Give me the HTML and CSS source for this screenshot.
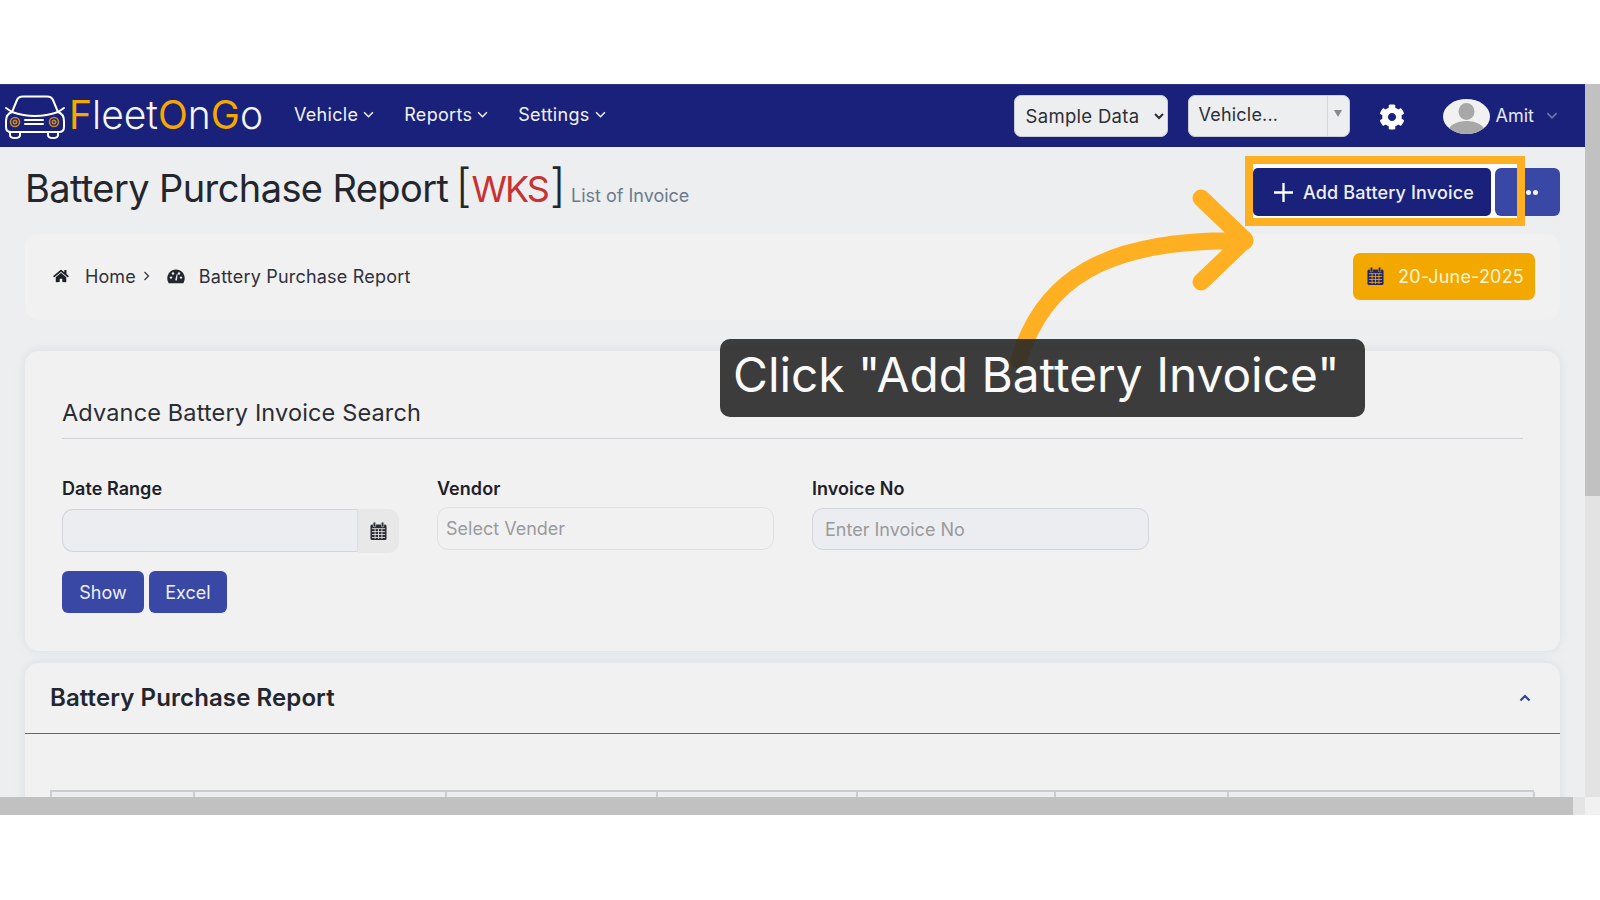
FILE: index.html
```html
<!DOCTYPE html>
<html lang="en">
<head>
<meta charset="utf-8">
<title>Battery Purchase Report</title>
<link rel="stylesheet" href="styles.css">
</head>
<body>
<svg class="defs" aria-hidden="true">
  <symbol id="cal" viewBox="0 0 18 20">
    <rect x="0.5" y="3" width="17" height="16.5" rx="1.6" fill="currentColor"/>
    <rect x="3.4" y="0.6" width="2.6" height="5" rx="1.2" fill="currentColor" stroke="var(--cell)" stroke-width=".7"/>
    <rect x="12" y="0.6" width="2.6" height="5" rx="1.2" fill="currentColor" stroke="var(--cell)" stroke-width=".7"/>
    <g stroke="var(--cell)" stroke-width=".9">
      <path d="M2 7.5H16M2 10.6H16M2 13.7H16M2 16.8H16M5.4 7.5V18.4M9 7.5V18.4M12.6 7.5V18.4"/>
    </g>
  </symbol>
</svg>

<div class="gap-top"></div>

<div class="frame">
  <div class="viewport">
    <div class="page">
      <nav class="nav">
        <a class="brand">
          <svg class="car" viewBox="0 0 60 44" aria-hidden="true">
            <g fill="none" stroke="#fff" stroke-width="2" stroke-linecap="round" stroke-linejoin="round">
              <path d="M7 17 12 5Q13.5 1.500 18 1.500H42Q46.500 1.500 48 5L53 17"/>
              <path d="M1 13 7 17Q30 25 53 17L59 13"/>
              <path d="M7 17Q1 19 1 26V32Q1 37 6 37H54Q59 37 59 32V26Q59 19 53 17"/>
              <path d="M5 37V40Q5 43 10 43T15 40V37M43 37V40Q43 43 48 43T53 40V37"/>
              <path d="M20 25H38M20 29H38"/>
            </g>
            <g fill="none" stroke="#c98a25" stroke-width="1.600">
              <circle cx="10" cy="27" r="4.500"/><circle cx="10" cy="27" r="1.700"/>
              <circle cx="49" cy="27" r="4.500"/><circle cx="49" cy="27" r="1.700"/>
            </g>
          </svg>
          <span class="brand-name"><b>F</b>leet<b>O</b>n<b>G</b>o</span>
        </a>
        <ul class="menu">
          <li class="menu-item">Vehicle<svg class="chev" viewBox="0 0 10 6"><path d="M1 1 5 5 9 1"/></svg></li>
          <li class="menu-item">Reports<svg class="chev" viewBox="0 0 10 6"><path d="M1 1 5 5 9 1"/></svg></li>
          <li class="menu-item">Settings<svg class="chev" viewBox="0 0 10 6"><path d="M1 1 5 5 9 1"/></svg></li>
        </ul>
        <div class="nav-right">
          <select class="sample"><option>Sample Data</option></select>
          <div class="vehicle">
            <span class="vehicle-text">Vehicle...</span>
            <span class="vehicle-caret"><i class="caret"></i></span>
          </div>
          <svg class="gear" viewBox="0 0 512 512" aria-hidden="true"><path d="M487.4 315.7l-42.6-24.6c4.3-23.2 4.3-47 0-70.2l42.6-24.6c4.9-2.8 7.1-8.6 5.5-14-11.1-35.6-30-67.8-54.7-94.6-3.8-4.1-10-5.1-14.8-2.3L380.8 110c-17.9-15.4-38.500-27.300-60.800-35.100V25.800c0-5.600-3.900-10.500-9.400-11.700-36.700-8.200-74.300-7.800-109.200 0-5.500 1.200-9.400 6.100-9.400 11.700V75c-22.200 7.900-42.800 19.800-60.800 35.100L88.700 85.500c-4.900-2.800-11-1.900-14.800 2.300-24.700 26.700-43.600 58.900-54.700 94.600-1.700 5.400.6 11.200 5.500 14L67.300 221c-4.300 23.200-4.300 47 0 70.200l-42.600 24.600c-4.900 2.800-7.100 8.600-5.500 14 11.100 35.600 30 67.800 54.700 94.600 3.800 4.100 10 5.100 14.800 2.300l42.600-24.600c17.900 15.400 38.500 27.300 60.800 35.100v49.200c0 5.600 3.900 10.500 9.400 11.700 36.700 8.200 74.300 7.800 109.200 0 5.500-1.200 9.400-6.100 9.400-11.700v-49.200c22.200-7.900 42.800-19.800 60.800-35.100l42.600 24.600c4.900 2.800 11 1.900 14.800-2.300 24.700-26.700 43.600-58.900 54.700-94.600 1.500-5.500-.7-11.300-5.600-14.100zM256 336c-44.100 0-80-35.900-80-80s35.900-80 80-80 80 35.900 80 80-35.900 80-80 80z"/></svg>
          <svg class="avatar" viewBox="0 0 47 35" aria-hidden="true">
            <defs><clipPath id="av"><ellipse cx="23.500" cy="17.500" rx="23.500" ry="17.500"/></clipPath></defs>
            <ellipse cx="23.500" cy="17.500" rx="23.500" ry="17.500" fill="#f1f1f1"/>
            <g clip-path="url(#av)" fill="#a8a8a8">
              <ellipse cx="23.500" cy="12.500" rx="8" ry="8.500"/>
              <ellipse cx="23.500" cy="32" rx="18" ry="10"/>
            </g>
          </svg>
          <span class="user">Amit</span>
          <svg class="chev chev-user" viewBox="0 0 10 6"><path d="M1 1 5 5 9 1"/></svg>
        </div>
      </nav>

      <main class="content">
        <header class="head">
          <h1 class="title">Battery Purchase Report <span class="tag"><span class="br">[</span><em>WKS</em><span class="br">]</span></span> <small class="sub">List of Invoice</small></h1>
          <div class="actions">
            <button class="btn-add"><svg class="plus" viewBox="0 0 18 18"><path d="M9 0V18M0 9H18"/></svg>Add Battery Invoice</button>
            <button class="btn-more"><i class="dot"></i><i class="dot"></i></button>
          </div>
        </header>

        <section class="crumbs">
          <svg class="ico-home" viewBox="0 0 576 512" aria-hidden="true"><path d="M280.37 148.26L96 300.11V464a16 16 0 0 0 16 16l112.06-.29a16 16 0 0 0 15.92-16V368a16 16 0 0 1 16-16h64a16 16 0 0 1 16 16v95.64a16 16 0 0 0 16 16.05L464 480a16 16 0 0 0 16-16V300L295.67 148.26a12.19 12.19 0 0 0-15.3 0zM571.6 251.47L488 182.56V44.05a12 12 0 0 0-12-12h-56a12 12 0 0 0-12 12v72.61L318.47 43a48 48 0 0 0-61 0L4.34 251.47a12 12 0 0 0-1.6 16.9l25.5 31A12 12 0 0 0 45.15 301l235.22-193.74a12.19 12.19 0 0 1 15.3 0L530.9 301a12 12 0 0 0 16.9-1.6l25.5-31a12 12 0 0 0-1.7-16.93z"/></svg>
          <span class="crumb-home">Home</span>
          <svg class="crumb-sep" viewBox="0 0 6 10"><path d="M1 1 5 5 1 9"/></svg>
          <svg class="ico-gauge" viewBox="0 0 18 15" aria-hidden="true">
            <path d="M9 .5C4 .5 .3 4.500 .3 9.300 .3 11 .8 12.700 1.700 14.200H16.300C17.200 12.700 17.700 11 17.700 9.300 17.700 4.500 14 .5 9 .5Z" fill="#24262e"/>
            <g fill="#f1f1f2"><circle cx="4" cy="8.600" r="1.200"/><circle cx="6" cy="4.500" r="1.200"/><circle cx="12" cy="4.500" r="1.200"/><circle cx="14" cy="8.600" r="1.200"/>
            <path d="M9.800 5 10.600 5.200 9.900 11.500 8.100 11.300Z"/></g>
          </svg>
          <span class="crumb-page">Battery Purchase Report</span>
          <div class="date-pill"><svg class="ico-cal cal-navy"><use href="#cal"/></svg>20-June-2025</div>
        </section>

        <section class="card search">
          <h2 class="search-title">Advance Battery Invoice Search</h2>
          <div class="fields">
            <div class="field">
              <label class="label">Date Range</label>
              <div class="range">
                <input class="input input-range" type="text">
                <span class="addon"><svg class="ico-cal cal-dark"><use href="#cal"/></svg></span>
              </div>
            </div>
            <div class="field">
              <label class="label">Vendor</label>
              <input class="input input-plain input-vendor" type="text" placeholder="Select Vender">
            </div>
            <div class="field">
              <label class="label">Invoice No</label>
              <input class="input input-plain input-invoice" type="text" placeholder="Enter Invoice No">
            </div>
          </div>
          <div class="form-actions">
            <button class="btn btn-show">Show</button>
            <button class="btn btn-excel">Excel</button>
          </div>
        </section>

        <section class="card report">
          <div class="report-head">
            <h2 class="report-title">Battery Purchase Report</h2>
            <svg class="collapse" viewBox="0 0 12 8"><path d="M1.500 6.500 6 2 10.500 6.500"/></svg>
          </div>
          <div class="table-head">
            <div class="th"></div><div class="th"></div><div class="th"></div><div class="th"></div><div class="th"></div><div class="th"></div><div class="th"></div>
          </div>
        </section>
      </main>
    </div>
    <div class="hscroll"><div class="hthumb"></div></div>
  </div>
  <div class="vscroll">
    <div class="vthumb"></div>
    <div class="vtrack"></div>
    <div class="corner"></div>
  </div>

  <div class="spot"></div>
  <svg class="arrow" viewBox="0 0 280 190" aria-hidden="true">
    <path d="M9 170C32 92 92 48 235 51M191 8 235 50 191 92"/>
  </svg>
  <div class="callout">Click "Add Battery Invoice"</div>
</div>
</body>
</html>
```

FILE: styles.css
```css
* { box-sizing: border-box; }
html, body { margin: 0; padding: 0; background: #fff; }
body { font-family: Inter, "Open Sans", sans-serif; color: #2a2c33; width: 1600px; height: 900px; overflow: hidden; }
.defs { position: absolute; width: 0; height: 0; }
.gap-top { height: 84px; }

.frame { position: relative; display: flex; height: 731px; }
.viewport { width: 1585px; display: flex; flex-direction: column; }
.page { height: 713px; overflow: hidden; background: #eceef0; }

.hscroll { height: 18px; background: #e4e4e4; }
.hthumb { width: 1573px; height: 100%; background: #c1c1c1; }
.vscroll { width: 15px; display: flex; flex-direction: column; }
.vthumb { height: 412px; background: #c1c1c1; }
.vtrack { flex: 1; background: #e3e3e3; }
.corner { height: 18px; background: #f1f1f1; }

/* nav */
.nav { height: 63px; background: #19217a; display: flex; align-items: center; padding-left: 5px; color: #f2f3f8; border-top: 1px solid #2a3388; }
.brand { display: flex; align-items: center; }
.car { width: 60px; height: 44px; margin-top: 2px; }
.brand-name { font-family: Inter, sans-serif; font-weight: 300; font-size: 39px; margin: -3px 0 0 4px; color: #f4f5fa; line-height: 1; letter-spacing: 0; }
.brand-name b { font-weight: 400; color: #f5a800; }
.menu { list-style: none; display: flex; margin: -3px 0 0 31px; padding: 0; gap: 30px; }
.menu-item { font-size: 18px; letter-spacing: .3px; display: flex; align-items: center; gap: 5px; }
.chev { width: 11px; height: 7px; fill: none; stroke: currentColor; stroke-width: 1.4; }
.nav-right { margin-left: auto; display: flex; align-items: center; }
.sample { width: 154px; height: 42px; margin-top: 0; border: 1px solid #c9ccd2; border-radius: 7px; background: #eceef0; color: #2c2e35; font: 18.500px Inter, sans-serif; letter-spacing: .3px; padding: 0 4px 0 7px; }
.vehicle { width: 162px; height: 42px; margin: 0 0 0 20px; display: flex; align-items: center; background: #eceef0; border: 1px solid #c9ccd2; border-radius: 7px; color: #2c2e35; font-size: 18px; letter-spacing: .2px; }
.vehicle-text { flex: 1; padding-left: 10px; margin-top: -3px; }
.vehicle-caret { width: 22px; height: 100%; border-left: 1px solid #d2d4d8; display: flex; justify-content: center; padding-top: 14px; }
.caret { width: 0; height: 0; border: 4px solid transparent; border-top: 7px solid #8a8a8a; }
.gear { width: 26px; height: 26px; fill: #fff; margin: 2px 0 0 29px; }
.avatar { width: 47px; height: 35px; margin: 0 0 0 38px; }
.user { font-size: 18px; margin: -2px 0 0 6px; color: #e6e8f3; }
.chev-user { margin: -2px 27px 0 12px; color: #6e75ad; width: 12px; }

/* header */
.content { padding: 0 25px; }
.head { height: 87px; display: flex; justify-content: space-between; padding-top: 21px; }
.title { margin: -9px 0 0; font-weight: 400; font-size: 38px; line-height: 52px; letter-spacing: -.6px; color: #24262d; white-space: nowrap; height: 52px; }
.tag { margin-left: -3px; }
.br { font-size: 46px; font-weight: 300; letter-spacing: 0; }
.tag em { font-style: normal; color: #c73232; font-size: 36px; letter-spacing: -2px; margin: 0 2px 0 0; }
.sub { font-size: 18px; color: #6b7a8d; letter-spacing: 0; margin-left: -5px; }
.actions { position: relative; display: flex; gap: 4px; height: 48px; }
.actions::before { content: ""; position: absolute; left: -2px; top: -6px; width: 266px; height: 56px; background: #fff; }
.btn-add { position: relative; width: 238px; height: 48px; border: 0; border-radius: 5px; background: #19217a; color: #eef0f8; font: 500 18px Inter, sans-serif; letter-spacing: .15px; display: flex; align-items: center; padding: 0 0 0 21px; gap: 10px; }
.plus { width: 19px; height: 19px; fill: none; stroke: #fff; stroke-width: 2.200; }
.btn-more { position: relative; width: 65px; height: 48px; border: 0; border-radius: 6px; background: #3947a5; display: flex; align-items: center; justify-content: flex-start; padding: 0 0 0 31px; gap: 2px; }
.dot { width: 5px; height: 5px; border-radius: 50%; background: #f4f5fa; }

/* breadcrumb */
.crumbs { height: 86px; border-radius: 14px; background: #f1f1f2; display: flex; align-items: center; padding: 0 25px 2px 28px; font-size: 18px; color: #2f313a; }
.ico-home { width: 16px; height: 14px; fill: #1e2027; }
.crumb-home { margin-left: 16px; letter-spacing: .1px; }
.crumb-sep { width: 7px; height: 10px; margin-left: 7px; fill: none; stroke: #2f313a; stroke-width: 1.200; }
.ico-gauge { width: 18px; height: 15px; margin-left: 17px; }
.crumb-page { margin-left: 14px; letter-spacing: .2px; }
.date-pill { margin-left: auto; width: 182px; height: 47px; border-radius: 7px; background: #f3a800; color: #fdf3da; display: flex; align-items: center; padding-left: 14px; gap: 14px; font-size: 18px; letter-spacing: .18px; }
.ico-cal { width: 17px; height: 20px; }
.cal-navy { color: #1f2472; --cell: #f3a800; }
.cal-dark { color: #2a2c33; --cell: #e9e9ea; }

/* cards */
.card { background: #f1f1f2; border-radius: 14px; box-shadow: 0 0 8px rgba(190, 192, 198, .35); }
.search { margin-top: 31px; height: 300px; padding: 46px 37px 0; }
.search-title { margin: 0; font-weight: 400; font-size: 23.500px; letter-spacing: .15px; line-height: 32px; padding-bottom: 9px; border-bottom: 1px solid #cfd1d5; height: 42px; color: #2a2c33; white-space: nowrap; }
.fields { display: flex; gap: 38px; margin-top: 38px; }
.field { width: 337px; }
.label { display: block; font-weight: 600; font-size: 18px; letter-spacing: .05px; line-height: 24px; color: #1e2027; margin-bottom: 8px; }
.range { display: flex; }
.input { height: 43px; border-radius: 11px; font: 18px Inter, sans-serif; color: #333; padding: 0 12px; outline: 0; }
.input::placeholder { color: #9a9a9d; }
.input-range { width: 296px; border: 1.500px solid #d4d5da; border-right: 1px solid #dcdde0; background: #ecedf0; border-radius: 11px 0 0 11px; }
.addon { width: 41px; height: 44px; background: #e8e8e9; border-radius: 0 11px 11px 0; display: flex; align-items: center; justify-content: center; }
.input-plain { width: 337px; display: block; }
.input-vendor { background: #f1f1f2; border: 1.500px solid #e0e1e4; padding-left: 8px; margin-top: -2px; }
.input-invoice { background: #ecedf0; border: 1.500px solid #d4d5da; margin-top: -1px; height: 42px; }
.form-actions { display: flex; gap: 5px; margin-top: 18px; }
.btn { height: 42px; border: 0; border-radius: 6px; background: #3947a5; color: #eef0f8; font: 18px Inter, sans-serif; }
.btn-show { width: 82px; }
.btn-excel { width: 78px; }

.report { margin-top: 12px; height: 200px; }
.report-head { height: 71px; border-bottom: 1.500px solid #5563ad; display: flex; align-items: center; justify-content: space-between; padding: 0 29px 0 25px; }
.report-title { margin: -1px 0 0; font-weight: 600; font-size: 24px; letter-spacing: .1px; color: #24262d; }
.collapse { width: 12px; height: 8px; fill: none; stroke: #36438f; stroke-width: 2.200; }
.table-head { margin: 56px 0 0 25px; width: 1484px; height: 40px; display: grid; grid-template-columns: 143px 252px 211px 200px 198px 173px 306px; border: 2px solid #c9ccd1; border-right: 0; border-bottom: 0; }
.th { background: #ecedf0; border-right: 2px solid #c9ccd1; }

/* annotation overlay */
.spot { position: absolute; left: 1245px; top: 72px; width: 280px; height: 70px; border: 8.500px solid #ffb022; }
.arrow { position: absolute; left: 1010px; top: 106px; width: 280px; height: 190px; fill: none; stroke: #ffb022; stroke-width: 17; stroke-linecap: round; stroke-linejoin: round; overflow: visible; }
.callout { position: absolute; left: 720px; top: 255px; width: 645px; height: 78px; border-radius: 10px; background: rgba(40, 40, 40, .9); color: #fafafa; font-size: 47.800px; line-height: 72px; padding-left: 13px; white-space: nowrap; }
```
